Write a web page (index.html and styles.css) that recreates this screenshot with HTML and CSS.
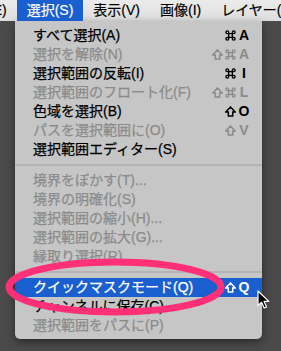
FILE: index.html
```html
<!DOCTYPE html>
<html lang="ja">
<head>
  <meta charset="utf-8">
  <link rel="stylesheet" href="styles.css">
  <title>選択メニュー</title>
</head>
<body>
  <svg class="defs" width="0" height="0">
    <symbol id="cmd" viewBox="0 0 12 12">
      <path d="M4 4 V2.5 A1.5 1.5 0 1 0 2.5 4 H9.5 A1.5 1.5 0 1 0 8 2.5 V9.5 A1.5 1.5 0 1 0 9.5 8 H2.5 A1.5 1.5 0 1 0 4 9.5 Z" fill="none" stroke="currentColor" stroke-width="1.5"/>
    </symbol>
    <symbol id="shift" viewBox="0 0 12 12">
      <path d="M6 1 L11.2 6.6 H8.4 V11 H3.6 V6.6 H0.8 Z" fill="none" stroke="currentColor" stroke-width="1.6" stroke-linejoin="miter"/>
    </symbol>
  </svg>

  <div class="screen">
    <div class="menubar">
      <span class="title first">編集(E)</span>
      <span class="title active">選択(S)</span>
      <span class="title">表示(V)</span>
      <span class="title">画像(I)</span>
      <span class="title">レイヤー(L)</span>
    </div>

    <div class="menu">
      <div class="row">
        <span class="label">すべて選択(A)</span>
        <span class="mods"><svg><use href="#cmd"/></svg></span><span class="key">A</span>
      </div>
      <div class="row off">
        <span class="label">選択を解除(N)</span>
        <span class="mods"><svg><use href="#shift"/></svg><svg><use href="#cmd"/></svg></span><span class="key">A</span>
      </div>
      <div class="row">
        <span class="label">選択範囲の反転(I)</span>
        <span class="mods"><svg><use href="#cmd"/></svg></span><span class="key">I</span>
      </div>
      <div class="row off">
        <span class="label">選択範囲のフロート化(F)</span>
        <span class="mods"><svg><use href="#shift"/></svg><svg><use href="#cmd"/></svg></span><span class="key">L</span>
      </div>
      <div class="row">
        <span class="label">色域を選択(B)</span>
        <span class="mods"><svg><use href="#shift"/></svg></span><span class="key">O</span>
      </div>
      <div class="row off">
        <span class="label">パスを選択範囲に(O)</span>
        <span class="mods"><svg><use href="#shift"/></svg></span><span class="key">V</span>
      </div>
      <div class="row"><span class="label">選択範囲エディター(S)</span></div>
      <div class="sep"></div>
      <div class="row off"><span class="label">境界をぼかす(T)...</span></div>
      <div class="row off"><span class="label">境界の明確化(S)</span></div>
      <div class="row off"><span class="label">選択範囲の縮小(H)...</span></div>
      <div class="row off"><span class="label">選択範囲の拡大(G)...</span></div>
      <div class="row off"><span class="label">縁取り選択(R)</span></div>
      <div class="sep"></div>
      <div class="row hot">
        <span class="label">クイックマスクモード(Q)</span>
        <span class="mods"><svg><use href="#shift"/></svg></span><span class="key">Q</span>
      </div>
      <div class="row"><span class="label">チャンネルに保存(C)</span></div>
      <div class="row off"><span class="label">選択範囲をパスに(P)</span></div>
    </div>

    <svg class="ring" width="232" height="66" viewBox="0 0 232 66">
      <ellipse cx="115" cy="32" rx="106" ry="25" fill="none" stroke="#ff2f78" stroke-width="7"/>
    </svg>

    <svg class="cursor" width="14" height="20" viewBox="0 0 14 20">
      <path d="M1 1 L1 15.5 L4.6 12.3 L7.2 18 L9.6 17 L7.1 11.4 L11.8 11.4 Z" fill="#000" stroke="#fff" stroke-width="1.2" stroke-linejoin="round"/>
    </svg>
  </div>
</body>
</html>
```

FILE: styles.css
```css
:root {
  --desk: #4a4a4a;
  --bar: #e4e4e4;
  --panel: #c6c6c6;
  --blue: #1a5fcf;
  --dim: #8b8b8b;
}

html, body {
  margin: 0;
  padding: 0;
}

body {
  background: var(--desk);
  font-family: "Liberation Sans", "Noto Sans CJK JP", sans-serif;
  font-size: 14px;
  color: #000;
  overflow: hidden;
}

.defs {
  position: absolute;
  width: 0;
  height: 0;
}

.screen {
  position: relative;
  width: 281px;
  height: 351px;
  overflow: hidden;
}

.menubar {
  display: flex;
  height: 21px;
  background: linear-gradient(#ebebeb, #dedede);
  white-space: nowrap;
  -webkit-text-stroke: 0.2px currentColor;
}

.title {
  padding: 0 10px;
  line-height: 21px;
}

.title.first {
  margin-left: -50px;
}

.title.active {
  background: var(--blue);
  color: #fff;
}

.menu {
  margin-left: 15px;
  width: 247px;
  padding: 5px 0 4px;
  background: var(--panel);
  border-radius: 0 0 5px 5px;
  box-shadow: 0 3px 8px rgba(0, 0, 0, 0.45);
}

.row {
  display: flex;
  align-items: center;
  height: 19px;
  line-height: 19px;
  padding: 0 11px 0 18px;
  white-space: nowrap;
  -webkit-text-stroke: 0.25px currentColor;
}

.row .label {
  flex: 1;
}

.mods {
  display: flex;
  gap: 2px;
  margin-right: 1px;
}

.mods svg {
  width: 11px;
  height: 11px;
  display: block;
}

.key {
  width: 14px;
  text-align: center;
  font-weight: bold;
  -webkit-text-stroke: 0;
}

.row.off {
  color: var(--dim);
}

.row.hot {
  background: var(--blue);
  color: #fff;
}

.sep {
  height: 12px;
  display: flex;
  align-items: center;
}

.sep::before {
  content: "";
  flex: 1;
  height: 2px;
  background: #b4b4b4;
}

.ring {
  position: absolute;
  left: 0;
  top: 255px;
}

.cursor {
  position: absolute;
  left: 257px;
  top: 290px;
}
```
